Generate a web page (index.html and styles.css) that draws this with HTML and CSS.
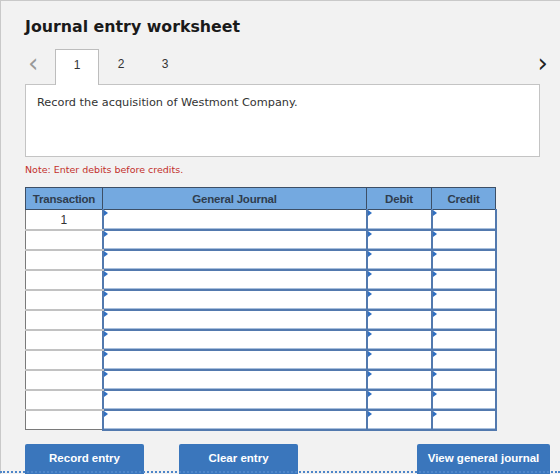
FILE: index.html
```html
<!DOCTYPE html>
<html>
<head>
<meta charset="utf-8">
<link rel="stylesheet" href="styles.css">
</head>
<body>
<div class="frame">
  <h1 class="title">Journal entry worksheet</h1>
  <div class="tabs">
    <span class="arrow prev">&lsaquo;</span>
    <span class="tab active">1</span>
    <span class="tab">2</span>
    <span class="tab">3</span>
    <span class="spacer"></span>
    <span class="arrow next">&rsaquo;</span>
  </div>
  <div class="prompt">Record the acquisition of Westmont Company.</div>
  <div class="note">Note: Enter debits before credits.</div>
  <table class="journal">
    <colgroup>
      <col class="c-tr"><col class="c-gj"><col class="c-dr"><col class="c-cr">
    </colgroup>
    <thead>
      <tr><th>Transaction</th><th>General Journal</th><th>Debit</th><th>Credit</th></tr>
    </thead>
    <tbody>
      <tr><td class="tr">1</td><td class="in"><i></i></td><td class="in"><i></i></td><td class="in"><i></i></td></tr>
      <tr><td class="tr"></td><td class="in"><i></i></td><td class="in"><i></i></td><td class="in"><i></i></td></tr>
      <tr><td class="tr"></td><td class="in"><i></i></td><td class="in"><i></i></td><td class="in"><i></i></td></tr>
      <tr><td class="tr"></td><td class="in"><i></i></td><td class="in"><i></i></td><td class="in"><i></i></td></tr>
      <tr><td class="tr"></td><td class="in"><i></i></td><td class="in"><i></i></td><td class="in"><i></i></td></tr>
      <tr><td class="tr"></td><td class="in"><i></i></td><td class="in"><i></i></td><td class="in"><i></i></td></tr>
      <tr><td class="tr"></td><td class="in"><i></i></td><td class="in"><i></i></td><td class="in"><i></i></td></tr>
      <tr><td class="tr"></td><td class="in"><i></i></td><td class="in"><i></i></td><td class="in"><i></i></td></tr>
      <tr><td class="tr"></td><td class="in"><i></i></td><td class="in"><i></i></td><td class="in"><i></i></td></tr>
      <tr><td class="tr"></td><td class="in"><i></i></td><td class="in"><i></i></td><td class="in"><i></i></td></tr>
      <tr><td class="tr last"></td><td class="in"><i></i></td><td class="in"><i></i></td><td class="in"><i></i></td></tr>
    </tbody>
  </table>
  <div class="buttons">
    <button class="btn btn-record">Record entry</button>
    <button class="btn btn-clear">Clear entry</button>
    <span class="spacer"></span>
    <button class="btn btn-view">View general journal</button>
  </div>
  <div class="dots"></div>
</div>
</body>
</html>
```

FILE: styles.css
```css
* { box-sizing: border-box; }
html, body { margin: 0; padding: 0; }
body {
  width: 560px;
  height: 474px;
  overflow: hidden;
  background: #f2f2f2;
  font-family: "DejaVu Sans", Verdana, sans-serif;
}
.frame {
  position: relative;
  height: 474px;
  border-top: 1px solid #c9c9c9;
  border-left: 1px solid #c9c9c9;
  background: #f2f2f2;
  padding-left: 24px;
}
.title {
  margin: 0;
  padding-top: 16px;
  height: 48px;
  font-size: 15.8px;
  line-height: 20px;
  font-weight: bold;
  color: #1a1a1a;
}
.tabs {
  display: flex;
  align-items: stretch;
  height: 35px;
  width: 524px;
  position: relative;
  z-index: 1;
}
.arrow {
  font-family: "DejaVu Sans", sans-serif;
  font-size: 26px;
  line-height: 26px;
  padding-top: 1px;
  color: #999;
}
.prev { width: 30px; padding-left: 3px; }
.next { color: #222; font-size: 26px; padding-right: 1px; }
.spacer { flex: 1; }
.tab {
  width: 44px;
  text-align: center;
  font-family: "Liberation Sans", Arial, sans-serif;
  font-size: 12px;
  line-height: 12px;
  padding-top: 9px;
  color: #333;
}
.tab.active {
  background: #fff;
  border: 1px solid #bdbdbd;
  border-bottom: none;
  height: 36px;
}
.prompt {
  width: 515px;
  height: 73px;
  background: #fff;
  border: 1px solid #c4c4c4;
  padding: 11px 0 0 11px;
  font-size: 11.3px;
  line-height: 14px;
  color: #333;
}
.note {
  height: 30px;
  padding-top: 7px;
  font-size: 9.5px;
  line-height: 12px;
  color: #c3302c;
}
.journal {
  border-collapse: collapse;
  table-layout: fixed;
  width: 470px;
  font-family: "Liberation Sans", Arial, sans-serif;
}
.c-tr { width: 77px; }
.c-gj { width: 264px; }
.c-dr { width: 65px; }
.c-cr { width: 64px; }
.journal th {
  height: 22px;
  padding: 0;
  background: #74a9e0;
  border: 1px solid #3d4f66;
  font-size: 11.5px;
  font-weight: bold;
  letter-spacing: -0.2px;
  color: #2f3d4e;
  text-align: center;
}
.journal td {
  height: 20px;
  padding: 0;
}
.journal td.tr {
  background: #fff;
  border-left: 1px solid #7a7a7a;
  border-right: 1px solid #7a7a7a;
  border-bottom: 2px solid #c2c2c2;
  text-align: center;
  font-size: 12px;
  color: #333;
  padding-top: 1px;
}
.journal td.tr.last { border-bottom: 1px solid #7a7a7a; }
.journal td.in {
  position: relative;
  background: #fff;
  border: 2px solid #5279ae;
  border-top-width: 1px;
  box-shadow: inset 0 -1px 0 #a9c0dd;
}
.journal td.in i {
  position: absolute;
  left: 0;
  top: 0;
  width: 0;
  height: 0;
  border-top: 3px solid transparent;
  border-bottom: 3px solid transparent;
  border-left: 4px solid #2f6fc2;
}
.buttons {
  display: flex;
  width: 525px;
  margin-top: 13px;
}
.btn {
  height: 30px;
  padding: 0;
  border: none;
  border-radius: 2px 2px 0 0;
  background: #3a76bc;
  color: #fff;
  font-family: "Liberation Sans", Arial, sans-serif;
  font-size: 11.5px;
  font-weight: bold;
  line-height: 29px;
  padding-bottom: 3px;
}
.btn-record { width: 119px; }
.btn-clear { width: 119px; margin-left: 35px; }
.btn-view { width: 133px; }
.dots {
  position: absolute;
  left: -1px;
  right: 0;
  top: 470px;
  border-top: 2px dotted #4d86c9;
}
```
